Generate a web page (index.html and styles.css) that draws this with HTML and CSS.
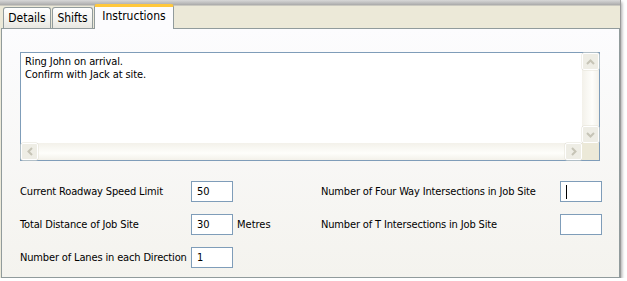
FILE: index.html
```html
<!DOCTYPE html>
<html>
<head>
<meta charset="utf-8">
<link rel="stylesheet" href="styles.css">
</head>
<body>
<div class="frame">
  <div class="tabstrip">
    <div class="tab tab-details">Details</div>
    <div class="tab tab-shifts">Shifts</div>
    <div class="tab tab-active">Instructions</div>
  </div>
  <div class="page">
    <div class="memo">
      <div class="memo-text">Ring John on arrival.<br>Confirm with Jack at site.</div>
      <div class="vscroll">
        <div class="sbtn"><svg width="9" height="6" viewBox="0 0 9 6"><path d="M1 5 L4.5 1.5 L8 5" fill="none" stroke="#c6c4b6" stroke-width="2"/></svg></div>
        <div class="vtrack"></div>
        <div class="sbtn"><svg width="9" height="6" viewBox="0 0 9 6"><path d="M1 1 L4.5 4.5 L8 1" fill="none" stroke="#c6c4b6" stroke-width="2"/></svg></div>
      </div>
      <div class="hscroll">
        <div class="sbtn"><svg width="6" height="9" viewBox="0 0 6 9"><path d="M5 1 L1.5 4.5 L5 8" fill="none" stroke="#c6c4b6" stroke-width="2"/></svg></div>
        <div class="htrack"></div>
        <div class="sbtn"><svg width="6" height="9" viewBox="0 0 6 9"><path d="M1 1 L4.5 4.5 L1 8" fill="none" stroke="#c6c4b6" stroke-width="2"/></svg></div>
      </div>
      <div class="corner"></div>
    </div>
    <div class="fields">
      <div class="col col-left">
        <div class="row"><span class="label label-left">Current Roadway Speed Limit</span><span class="input">50</span></div>
        <div class="row"><span class="label label-left">Total Distance of Job Site</span><span class="input">30</span><span class="unit">Metres</span></div>
        <div class="row"><span class="label label-left">Number of Lanes in each Direction</span><span class="input">1</span></div>
      </div>
      <div class="col col-right">
        <div class="row"><span class="label label-right">Number of Four Way Intersections in Job Site</span><span class="input"><span class="caret"></span></span></div>
        <div class="row"><span class="label label-right">Number of T Intersections in Job Site</span><span class="input"></span></div>
      </div>
    </div>
  </div>
</div>
</body>
</html>
```

FILE: styles.css
```css
* { box-sizing: border-box; }
html, body { margin: 0; padding: 0; background: #ffffff; }
body {
  font-family: "DejaVu Sans Condensed", "Liberation Sans", sans-serif;
  font-size: 11px;
  color: #000;
}
.frame {
  width: 620px;
  height: 278px;
  display: flex;
  flex-direction: column;
  background: #ECE9D8;
  box-shadow: 1px 0 0 #9a9a9a, 2px 2px 3px rgba(0,0,0,0.35);
}
.tabstrip {
  height: 28px;
  flex: none;
  display: flex;
  align-items: flex-end;
  padding-left: 3px;
  background: linear-gradient(#d8d8d8 0px, #b4b4b4 4px, #a8a8a8 5px, #ECE9D8 6px);
}
.tab {
  height: 21px;
  border: 1px solid #919B9C;
  border-bottom: none;
  border-radius: 3px 3px 0 0;
  background: linear-gradient(#ffffff, #f3f3ef 60%, #e8e7e1);
  font-size: 12px;
  display: flex;
  justify-content: center;
  padding-top: 3px;
  margin-right: 1px;
  color: #000;
}
.tab-details { width: 48px; }
.tab-shifts { width: 41px; }
.tab-active {
  width: 80px;
  height: 25px;
  margin-bottom: -1px;
  position: relative;
  z-index: 1;
  border-top: 3px solid #FFC83C;
  background: #FCFCFE;
  padding-top: 2px;
}
.page {
  flex: 1;
  margin-left: 1px;
  border: 1px solid #919B9C;
  background: linear-gradient(#FCFCFE, #F4F3EE);
  padding: 23px 0 0 18px;
}
.memo {
  width: 580px;
  height: 109px;
  border: 1px solid #7F9DB9;
  background: #fff;
  display: grid;
  grid-template-columns: 1fr 17px;
  grid-template-rows: 1fr 17px;
}
.memo-text {
  padding: 2px 4px;
  line-height: 13px;
  letter-spacing: -0.1px;
}
.vscroll {
  display: flex;
  flex-direction: column;
  background: linear-gradient(90deg, #F3F1EA, #FEFEFB 60%, #F3F1EA);
}
.hscroll {
  display: flex;
  background: linear-gradient(#F3F1EA, #FEFEFB 60%, #F3F1EA);
}
.vtrack, .htrack { flex: 1; }
.corner { background: #ECE9D8; }
.sbtn {
  width: 17px;
  height: 17px;
  flex: none;
  display: flex;
  align-items: center;
  justify-content: center;
  background: #EEEDE5;
  border: 1px solid #fff;
  border-radius: 2px;
  box-shadow: 0 0 0 0.5px #e3e1d6;
}
.fields {
  display: flex;
  margin-top: 20px;
}
.col {
  display: flex;
  flex-direction: column;
  gap: 12px;
}
.col-left { width: 301px; }
.row {
  display: flex;
  align-items: center;
  height: 21px;
}
.label {
  white-space: nowrap;
  flex: none;
  letter-spacing: -0.15px;
}
.label-left { width: 171px; }
.label-right { width: 239px; }
.input {
  flex: none;
  width: 42px;
  height: 21px;
  border: 1px solid #7F9DB9;
  background: #fff;
  padding-left: 5px;
  display: flex;
  align-items: center;
}
.unit { margin-left: 4px; white-space: nowrap; }
.caret {
  width: 1px;
  height: 14px;
  background: #000;
}
```
